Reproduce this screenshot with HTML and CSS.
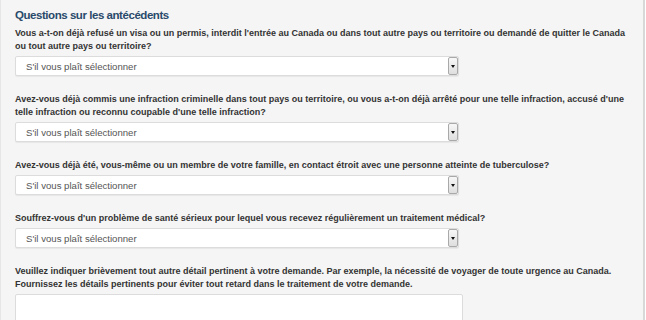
FILE: index.html
```html
<!DOCTYPE html>
<html>
<head>
  <title>Antécédents</title>
  <meta charset="UTF-8"/>
  <link rel="stylesheet" href="styles.css">
</head>
<body>

  <div class="panel">
    <h2 class="panel-title">Questions sur les antécédents</h2>

    <div class="field">
      <label for="q1">Vous a-t-on déjà refusé un visa ou un permis, interdit l'entrée au Canada ou dans tout autre pays ou territoire ou demandé de quitter le Canada ou tout autre pays ou territoire?</label>
      <div class="select-box">
        <select id="q1"><option>S'il vous plaît sélectionner</option></select>
        <span class="select-arrow"></span>
      </div>
    </div>

    <div class="field">
      <label for="q2">Avez-vous déjà commis une infraction criminelle dans tout pays ou territoire, ou vous a-t-on déjà arrêté pour une telle infraction, accusé d'une telle infraction ou reconnu coupable d'une telle infraction?</label>
      <div class="select-box">
        <select id="q2"><option>S'il vous plaît sélectionner</option></select>
        <span class="select-arrow"></span>
      </div>
    </div>

    <div class="field">
      <label for="q3">Avez-vous déjà été, vous-même ou un membre de votre famille, en contact étroit avec une personne atteinte de tuberculose?</label>
      <div class="select-box">
        <select id="q3"><option>S'il vous plaît sélectionner</option></select>
        <span class="select-arrow"></span>
      </div>
    </div>

    <div class="field">
      <label for="q4">Souffrez-vous d'un problème de santé sérieux pour lequel vous recevez régulièrement un traitement médical?</label>
      <div class="select-box">
        <select id="q4"><option>S'il vous plaît sélectionner</option></select>
        <span class="select-arrow"></span>
      </div>
    </div>

    <div class="field">
      <label for="q5">Veuillez indiquer brièvement tout autre détail pertinent à votre demande. Par exemple, la nécessité de voyager de toute urgence au Canada. Fournissez les détails pertinents pour éviter tout retard dans le traitement de votre demande.</label>
      <textarea id="q5" class="details"></textarea>
    </div>
  </div>

</body>
</html>
```

FILE: styles.css
```css
body {
  margin: 0;
  background-color: #ffffff;
  font-family: "Liberation Sans", Arial, sans-serif;
}

.panel {
  width: 628px;
  height: 320px;
  overflow: hidden;
  padding: 0 0 0 14px;
  background-color: #f5f5f5;
  border-left: 1px solid #e6e6e6;
  border-right: 2px solid #d8d8d8;
}

.panel-title {
  margin: 0 0 5px 0;
  padding-top: 8px;
  font-size: 11.5px;
  line-height: 14px;
  letter-spacing: -0.45px;
  font-weight: bold;
  color: #294a6b;
}

.field {
  display: flex;
  flex-direction: column;
  gap: 3px;
  margin-bottom: 17px;
}

.field label {
  font-size: 9px;
  font-weight: bold;
  line-height: 13px;
  color: #333333;
  padding-right: 8px;
}

.select-box {
  display: flex;
  align-items: stretch;
  width: 442px;
  height: 18px;
  background-color: #ffffff;
  border: 1px solid #dcdcdc;
  border-radius: 2px;
  box-shadow: 0 1px 1px rgba(0, 0, 0, 0.06);
}

.select-box select {
  flex: 1;
  appearance: none;
  -webkit-appearance: none;
  border: none;
  background: transparent;
  padding: 0 0 0 10px;
  font-family: "Liberation Sans", Arial, sans-serif;
  font-size: 9.6px;
  color: #555555;
  outline: none;
}

.select-arrow {
  position: relative;
  width: 8px;
  border: 1px solid #a9a9a9;
  border-radius: 2px;
  background: linear-gradient(#f7f7f7, #dedede);
}

.select-arrow::after {
  content: "";
  position: absolute;
  left: 2px;
  top: 7px;
  border-left: 2px solid transparent;
  border-right: 2px solid transparent;
  border-top: 3px solid #111111;
}

.details {
  width: 442px;
  height: 60px;
  margin: 0;
  background-color: #ffffff;
  border: 1px solid #dcdcdc;
  border-radius: 2px;
  resize: none;
}
```
